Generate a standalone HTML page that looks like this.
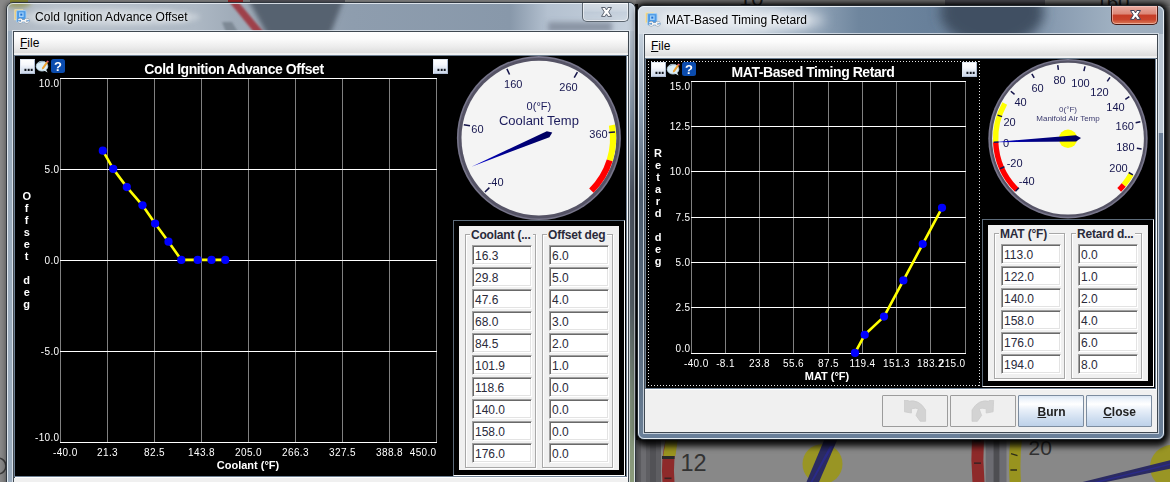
<!DOCTYPE html>
<html><head><meta charset="utf-8"><title>Ignition tables</title>
<style>
html,body{margin:0;padding:0}
body{width:1170px;height:482px;overflow:hidden;position:relative;background:#8a8a8a;font-family:"Liberation Sans", sans-serif;font-size:12px;color:#000}
div,span{box-sizing:border-box}
.abs{position:absolute}
.win{position:absolute;border-radius:7px 7px 7px 7px;}
.title{position:absolute;font-size:12px;color:#000;white-space:nowrap;text-shadow:0 0 5px rgba(255,255,255,.75),0 0 9px rgba(255,255,255,.55)}
.menu{position:absolute;background:linear-gradient(#ffffff 0%,#fbfbfb 30%,#ececec 65%,#dddddd 90%,#dddddd 91.3%,#eeeeee 91.4%,#f3f3f3 100%);}
.menu span{position:absolute;left:6px;top:4px;font-size:12px;line-height:14px}
.menu u{text-decoration:underline;text-underline-offset:1px}
.black{position:absolute;background:#000}
.tb{position:absolute;width:15px;height:15px;background:linear-gradient(#ffffff 0%,#f6f8fc 35%,#dde5f1 70%,#cdd8ea 100%);border:1px solid;border-color:#dfe6f0 #aebbd0 #aebbd0 #dfe6f0;font-size:11px;font-weight:bold;color:#223;line-height:12px;text-align:center}
.panel{position:absolute;background:#f0f0f0}
.grp{position:absolute;border:1px solid #d5d5d5;box-shadow:inset 1px 1px 0 #fff, 1px 1px 0 #fff;border-color:#a8a8a8}
.grp b{position:absolute;top:-7px;left:4px;background:#f0f0f0;padding:0 2px 0 1px;font-size:12px;line-height:14px;letter-spacing:-0.2px;color:#2a2a3a;white-space:nowrap}
.fld{position:absolute;height:20px;background:#fff;border:1px solid;border-color:#a0a0a0 #fff #fff #a0a0a0;box-shadow:inset 1px 1px 0 #696969,inset -1px -1px 0 #e3e3e3;font-size:12px;line-height:21px;padding-left:2px;color:#2a2a3a;white-space:nowrap;overflow:hidden}
.btn{position:absolute;height:32px;width:66px;border:1px solid #707070;border-radius:1px;font-size:12px;font-weight:bold;text-align:center;line-height:33px;color:#222;padding-left:1px}
.btn.on{background:linear-gradient(#dbe6f3 0%,#eef4fb 12%,#ffffff 27%,#e9f0f9 45%,#cfdef0 75%,#bdd1e9 100%);border-color:#7c8c9f}
.btn.off{background:#efefef;border-color:#9c9c9c}
svg text{font-family:"Liberation Sans", sans-serif}
</style></head><body>

<svg class="abs" style="left:0;top:0" width="1170" height="482" viewBox="0 0 1170 482">
<defs>
<filter id="bsh" x="-5%" y="-5%" width="110%" height="110%"><feGaussianBlur stdDeviation="3.2"/></filter>
<filter id="bsl" x="-5%" y="-5%" width="110%" height="110%"><feGaussianBlur stdDeviation="2"/></filter>
</defs>
<rect x="0" y="0" width="1170" height="482" fill="#888888"/>
<!-- things peeking above the windows -->
<rect x="228" y="0" width="15" height="3" fill="#a02828"/>
<rect x="250" y="0" width="95" height="3" fill="#56565c"/>
<rect x="10" y="0" width="18" height="3" fill="#8c8c34"/>
<rect x="636" y="0" width="534" height="6" fill="#7a7a7a"/>
<rect x="945" y="0" width="100" height="6" fill="#505058"/>
<text x="739" y="6" font-size="22" fill="#1c1c1c">10</text>
<text x="1096" y="9" font-size="20" fill="#1c1c1c">160</text>
<!-- lower strip objects -->
<rect x="636" y="436" width="25" height="46" fill="#5e5e62"/>
<rect x="641" y="436" width="5" height="46" fill="#6c6c70"/>
<rect x="650" y="436" width="6" height="46" fill="#525256"/>
<path d="M666,438 L678,438 Q672.5,460 674.5,482 L662.5,482 Q660.5,460 666,438Z" fill="#8e2a2a"/>
<path d="M666,438 L678,438 L675.4,456 L663.2,456Z" fill="#9a9420"/>
<rect x="662" y="456" width="12.5" height="3" fill="#2a2a2a"/>
<rect x="664.5" y="477.5" width="7" height="1.6" fill="#3a2222"/>
<text x="680.5" y="470.5" font-size="23.5" fill="#323232">12</text>
<circle cx="822.5" cy="464" r="20" fill="#999524"/>
<path d="M825,438 L838,438 L819,482 L806.5,482Z" fill="#2b2b62"/>
<path d="M830,446 L833,446 L812.5,482 L810.5,482Z" fill="#2a2a92" opacity=".8"/>
<path d="M972,438 L984,438 Q982.5,460 984.5,482 L972.5,482 Q970.5,460 972,438Z" fill="#8e2a2a"/>
<rect x="974" y="462.4" width="7" height="1.5" fill="#3a2222"/>
<rect x="974" y="440" width="7" height="1.5" fill="#3a2222"/>
<rect x="985.7" y="438" width="20.8" height="44" fill="#6c6c72"/>
<rect x="993.6" y="438" width="5.8" height="44" fill="#4e4e52"/>
<path d="M1010.5,438 L1022,438 Q1019.5,460 1021,482 L1009.6,482 Q1008,460 1010.5,438Z" fill="#98931f"/>
<path d="M1011,453.6 L1017.5,455.6 M1010.4,470 L1017,470" stroke="#2e2e1a" stroke-width="1.4"/>
<text x="1028.6" y="455" font-size="21" fill="#323232">20</text>
<circle cx="1172" cy="467" r="22" fill="#999524"/>
<path d="M1082.6,482 L1170,460.2 L1170,468.7 L1106,482Z" fill="#2b2b62"/>
<path d="M1094,482 L1170,463.5 L1170,465 L1100,482Z" fill="#2a2a92" opacity=".8"/>
<circle cx="-2" cy="466" r="8" fill="none" stroke="#3c3c3c" stroke-width="1.6"/>
<!-- window shadows -->
<rect x="4" y="1" width="634" height="490" rx="7" fill="#000" opacity=".12" filter="url(#bsl)"/>
<rect x="635" y="3" width="534" height="440" rx="8" fill="#000" opacity=".8" filter="url(#bsh)"/><rect x="638" y="20" width="528" height="427" rx="8" fill="#000" opacity=".55" filter="url(#bsh)"/>
<rect x="635" y="4" width="3" height="436" fill="#0c0c0c"/>
</svg>

<div class="win" style="left:6px;top:2px;width:630px;height:500px;border:1px solid #30373f;box-shadow:0 0 4px rgba(0,0,0,.32);overflow:hidden;background:#97a6b6">
<svg class="abs" style="left:-1px;top:-1px" width="630" height="482" viewBox="6 2 630 482">
<defs><filter id="bl1" x="-20%" y="-50%" width="140%" height="200%"><feGaussianBlur stdDeviation="2.6"/></filter>
<linearGradient id="lg1" x1="0" x2="1" y1="0" y2="0"><stop offset="0" stop-color="#aeb8c3"/><stop offset=".08" stop-color="#b8c1cb"/><stop offset=".3" stop-color="#adb8c4"/><stop offset=".36" stop-color="#a0acb9"/><stop offset=".55" stop-color="#8e9dae"/><stop offset=".8" stop-color="#8898aa"/><stop offset=".86" stop-color="#b4c1d0"/><stop offset="1" stop-color="#c6d1dd"/></linearGradient></defs>
<rect x="6" y="2" width="630" height="482" fill="url(#lg1)"/>
<g filter="url(#bl1)">
<path d="M246,-4 L345,-4 L328,40 L270,40Z" fill="#566270"/>

<ellipse cx="18" cy="2" rx="13" ry="6" fill="#8e8e3a" opacity=".7"/>
<rect x="548" y="22" width="64" height="10" fill="#7e8a98" opacity=".8"/>
<ellipse cx="110" cy="17" rx="90" ry="9" fill="#dfe5ea" opacity=".5"/>
</g>
<defs><filter id="bl1b" x="-20%" y="-20%" width="140%" height="140%"><feGaussianBlur stdDeviation="1.3"/></filter></defs>
<path d="M226,-2 L235,-2 L267,36 L257,36Z" fill="#9e3f48" filter="url(#bl1b)"/>
<path d="M222,22 L232,22 L238,32 L226,32Z" fill="#7d8894" filter="url(#bl1b)"/>
<rect x="7.5" y="31" width="6" height="455" fill="#9aabbc"/>
<defs><linearGradient id="lg4" x1="0" x2="0" y1="0" y2="1"><stop offset="0" stop-color="#bcc8d4"/><stop offset=".18" stop-color="#8595a7"/><stop offset=".36" stop-color="#4c5462"/><stop offset=".6" stop-color="#566068"/><stop offset=".8" stop-color="#7f8f7c"/><stop offset="1" stop-color="#8c9c7a"/></linearGradient></defs><rect x="629" y="31" width="6" height="455" fill="url(#lg4)"/>
<rect x="7.5" y="3.5" width="627" height="490" rx="5.5" fill="none" stroke="#e9eff5" stroke-opacity=".85" stroke-width="1"/>
<rect x="12.5" y="30.5" width="617" height="470" fill="none" stroke="#e6ecf2" stroke-opacity=".8"/>
</svg></div>
<svg class="abs" style="left:14px;top:9px" width="16" height="16" viewBox="0 0 16 16"><rect x="0.8" y="0.8" width="8" height="10" fill="#e8c878" stroke="#f4e4b0" stroke-width=".8"/><rect x="2.6" y="1.6" width="9.4" height="11.6" rx="1" fill="#4d9be6" stroke="#a8d0f4" stroke-width=".9"/><rect x="5" y="3.4" width="4.6" height="4.6" fill="#9fd0fa"/><rect x="6.3" y="4.6" width="2" height="2" fill="#1f6fd0"/><path d="M7.2,11.8 H11.8" stroke="#8e98a4" stroke-width="2.6"/><circle cx="6.2" cy="11.8" r="1.7" fill="none" stroke="#8e98a4" stroke-width="2"/><circle cx="12.8" cy="11.8" r="1.7" fill="none" stroke="#8e98a4" stroke-width="2"/><path d="M7.2,11.8 H11.8" stroke="#f4f6f8" stroke-width="1.7"/><circle cx="6.2" cy="11.8" r="1.7" fill="none" stroke="#f4f6f8" stroke-width="1.2"/><circle cx="12.8" cy="11.8" r="1.7" fill="none" stroke="#f4f6f8" stroke-width="1.2"/><path d="M3.6,11.8 h2 M13.4,11.8 h2" stroke="#4d9be6" stroke-width="1.1"/></svg>
<div class="title" style="left:35px;top:10px;line-height:14px;letter-spacing:.05px">Cold Ignition Advance Offset</div>
<div class="abs" style="left:582px;top:3px;width:47px;height:19px;border:1px solid #5c6670;border-top:none;border-radius:0 0 5px 5px;background:linear-gradient(rgba(255,255,255,.35),rgba(255,255,255,.16) 45%,rgba(220,228,238,.06) 50%,rgba(255,255,255,.2));box-shadow:inset 0 0 0 1px rgba(255,255,255,.55)"></div>
<svg class="abs" style="left:599px;top:6px" width="15" height="12" viewBox="0 0 15 12"><path d="M2.5,1.5 L6.2,1.5 L7.5,4 L8.8,1.5 L12.5,1.5 L9.7,5.95 L12.5,10.4 L8.8,10.4 L7.5,7.9 L6.2,10.4 L2.5,10.4 L5.3,5.95Z" fill="#fff" stroke="#5a6270" stroke-width="1" stroke-linejoin="round"/></svg>
<div class="abs" style="left:13px;top:31px;width:616px;height:460px;background:#3f4851"></div>
<div class="menu" style="left:14px;top:32px;width:614px;height:23px"><span><u>F</u>ile</span></div>
<div class="abs" style="left:14px;top:55px;width:613px;height:422px;background:#000;border:1px solid #6d7f92;box-shadow:1px 1px 0 #fff"></div>
<div class="abs" style="left:14px;top:478px;width:614px;height:4px;background:#f0f0f0"></div>

<div class="tb" style="left:20px;top:59px"></div><svg class="abs" style="left:20px;top:59px" width="15" height="15" viewBox="0 0 15 15"><text x="3.6" y="12" font-size="14" font-weight="bold" fill="#10141c" letter-spacing="-.8">...</text></svg><svg class="abs" style="left:35px;top:59px" width="16" height="16" viewBox="0 0 16 16"><ellipse cx="7" cy="7.2" rx="5.8" ry="4.9" fill="#dbeef8" stroke="#b9d3e2" stroke-width=".8"/><path d="M8.6,11.2 L12.6,13.6 L10.8,10Z" fill="#dbeef8"/><path d="M7.2,8.6 L11.4,2.6 L13,3.8 L8.8,9.8 L6.8,10.4Z" fill="#eda233"/><path d="M11.4,2.6 L12.2,1.4 L13.9,2.6 L13,3.8Z" fill="#e8607a"/><path d="M3.5,4 Q6,2.2 9.5,2.6" stroke="#8fa2ae" stroke-width=".9" fill="none"/></svg><div class="abs" style="left:51px;top:59px;width:14px;height:14px;background:#0b4cae;border-radius:2.5px;"></div><svg class="abs" style="left:51px;top:59px" width="14" height="14" viewBox="0 0 14 14"><text x="7" y="11.6" font-size="13" font-weight="bold" fill="#fff" text-anchor="middle">?</text></svg>
<div class="tb" style="left:433px;top:59px"></div><svg class="abs" style="left:433px;top:59px" width="15" height="15" viewBox="0 0 15 15"><text x="3.6" y="12" font-size="14" font-weight="bold" fill="#10141c" letter-spacing="-.8">...</text></svg>
<div class="abs" style="left:15px;top:60px;width:438px;height:18px;line-height:18px;text-align:center;color:#fff;font-size:14px;font-weight:bold;letter-spacing:-.44px;white-space:nowrap">Cold Ignition Advance Offset</div>
<svg class="abs" style="left:0;top:0" width="1170" height="482" viewBox="0 0 1170 482">
<rect x="60" y="78" width="1" height="365" fill="#808080"/>
<rect x="107" y="78" width="1" height="365" fill="#808080"/>
<rect x="154" y="78" width="1" height="365" fill="#808080"/>
<rect x="201" y="78" width="1" height="365" fill="#808080"/>
<rect x="248" y="78" width="1" height="365" fill="#808080"/>
<rect x="295" y="78" width="1" height="365" fill="#808080"/>
<rect x="342" y="78" width="1" height="365" fill="#808080"/>
<rect x="389" y="78" width="1" height="365" fill="#808080"/>
<rect x="436" y="78" width="1" height="365" fill="#808080"/>
<rect x="60" y="78" width="377" height="1" fill="#ffffff"/>
<rect x="60" y="169" width="377" height="1" fill="#ffffff"/>
<rect x="60" y="260" width="377" height="1" fill="#ffffff"/>
<rect x="60" y="351" width="377" height="1" fill="#ffffff"/>
<rect x="60" y="442" width="377" height="1" fill="#ffffff"/>
<text x="53" y="456.3" font-size="10" letter-spacing="0.35" fill="#fff" text-anchor="start">-40.0</text>
<text x="107.5" y="456.3" font-size="10" letter-spacing="0.35" fill="#fff" text-anchor="middle">21.3</text>
<text x="154.5" y="456.3" font-size="10" letter-spacing="0.35" fill="#fff" text-anchor="middle">82.5</text>
<text x="201.5" y="456.3" font-size="10" letter-spacing="0.35" fill="#fff" text-anchor="middle">143.8</text>
<text x="248.5" y="456.3" font-size="10" letter-spacing="0.35" fill="#fff" text-anchor="middle">205.0</text>
<text x="295.5" y="456.3" font-size="10" letter-spacing="0.35" fill="#fff" text-anchor="middle">266.3</text>
<text x="342.5" y="456.3" font-size="10" letter-spacing="0.35" fill="#fff" text-anchor="middle">327.5</text>
<text x="389.5" y="456.3" font-size="10" letter-spacing="0.35" fill="#fff" text-anchor="middle">388.8</text>
<text x="436.5" y="456.3" font-size="10" letter-spacing="0.35" fill="#fff" text-anchor="end">450.0</text>
<text x="59.5" y="87.3" font-size="10" letter-spacing="0.35" fill="#fff" text-anchor="end">10.0</text>
<text x="59.5" y="173.3" font-size="10" letter-spacing="0.35" fill="#fff" text-anchor="end">5.0</text>
<text x="59.5" y="264.3" font-size="10" letter-spacing="0.35" fill="#fff" text-anchor="end">0.0</text>
<text x="59.5" y="355.3" font-size="10" letter-spacing="0.35" fill="#fff" text-anchor="end">-5.0</text>
<text x="59.5" y="441.3" font-size="10" letter-spacing="0.35" fill="#fff" text-anchor="end">-10.0</text>
<text x="248" y="469" font-size="11" font-weight="bold" fill="#fff" text-anchor="middle">Coolant (°F)</text>
<text x="26.7" y="200" font-size="11" font-weight="bold" fill="#fff" text-anchor="middle">O</text>
<text x="26.7" y="212" font-size="11" font-weight="bold" fill="#fff" text-anchor="middle">f</text>
<text x="26.7" y="224" font-size="11" font-weight="bold" fill="#fff" text-anchor="middle">f</text>
<text x="26.7" y="236" font-size="11" font-weight="bold" fill="#fff" text-anchor="middle">s</text>
<text x="26.7" y="248" font-size="11" font-weight="bold" fill="#fff" text-anchor="middle">e</text>
<text x="26.7" y="260" font-size="11" font-weight="bold" fill="#fff" text-anchor="middle">t</text>
<text x="26.7" y="284" font-size="11" font-weight="bold" fill="#fff" text-anchor="middle">d</text>
<text x="26.7" y="296" font-size="11" font-weight="bold" fill="#fff" text-anchor="middle">e</text>
<text x="26.7" y="308" font-size="11" font-weight="bold" fill="#fff" text-anchor="middle">g</text>
<polyline points="102.8,150.7 113.2,168.9 126.8,187.1 142.5,205.3 155.1,223.5 168.5,241.7 181.3,259.9 197.7,259.9 211.5,259.9 225.3,259.9" fill="none" stroke="#ffff00" stroke-width="2.6" stroke-linejoin="round"/>
<circle cx="102.8" cy="150.7" r="4.1" fill="#0000ff"/>
<circle cx="113.2" cy="168.9" r="4.1" fill="#0000ff"/>
<circle cx="126.8" cy="187.1" r="4.1" fill="#0000ff"/>
<circle cx="142.5" cy="205.3" r="4.1" fill="#0000ff"/>
<circle cx="155.1" cy="223.5" r="4.1" fill="#0000ff"/>
<circle cx="168.5" cy="241.7" r="4.1" fill="#0000ff"/>
<circle cx="181.3" cy="259.9" r="4.1" fill="#0000ff"/>
<circle cx="197.7" cy="259.9" r="4.1" fill="#0000ff"/>
<circle cx="211.5" cy="259.9" r="4.1" fill="#0000ff"/>
<circle cx="225.3" cy="259.9" r="4.1" fill="#0000ff"/>
<circle cx="538.9" cy="138.1" r="82" fill="#77758a"/>
<circle cx="538.9" cy="138.1" r="80.4" fill="#555365"/>
<circle cx="538.9" cy="138.1" r="77.4" fill="#f4f4f4"/>
<path d="M611.95,125.09 A74.2,74.2 0 0 1 609.69,160.35" fill="none" stroke="#ffff00" stroke-width="6.2"/>
<path d="M609.69,160.35 A74.2,74.2 0 0 1 591.37,190.57" fill="none" stroke="#ff0000" stroke-width="6.2"/>
<line x1="484.95" y1="192.05" x2="489.40" y2="187.60" stroke="#14144a" stroke-width="1.5"/>
<text x="495.6" y="185.6" font-size="11" fill="#15154e" text-anchor="middle">-40</text>
<line x1="463.78" y1="124.72" x2="469.99" y2="125.82" stroke="#14144a" stroke-width="1.5"/>
<text x="477.4" y="132.6" font-size="11" fill="#15154e" text-anchor="middle">60</text>
<line x1="506.90" y1="68.83" x2="509.54" y2="74.55" stroke="#14144a" stroke-width="1.5"/>
<text x="513.3" y="88.0" font-size="11" fill="#15154e" text-anchor="middle">160</text>
<line x1="577.40" y1="72.23" x2="574.22" y2="77.67" stroke="#14144a" stroke-width="1.5"/>
<text x="568.5" y="90.9" font-size="11" fill="#15154e" text-anchor="middle">260</text>
<line x1="614.96" y1="131.99" x2="608.68" y2="132.50" stroke="#14144a" stroke-width="1.5"/>
<text x="598.5" y="138.0" font-size="11" fill="#15154e" text-anchor="middle">360</text>
<text x="538.9" y="109.69999999999999" font-size="11" fill="#1c1c5c" text-anchor="middle">0(°F)</text>
<text x="538.9" y="124.6" font-size="13" fill="#1c1c5c" text-anchor="middle">Coolant Temp</text>
<defs><linearGradient id="ng538" gradientUnits="userSpaceOnUse" x1="471.5" y1="166.7" x2="552.3" y2="132.4"><stop offset="0" stop-color="#0000d8"/><stop offset=".45" stop-color="#000088"/><stop offset="1" stop-color="#00005c"/></linearGradient></defs>
<polygon points="471.50,166.65 549.40,137.24 552.25,132.44 546.82,131.16" fill="url(#ng538)"/>
</svg>
<div class="abs" style="left:453px;top:220px;width:172px;height:256px;border:1px solid;border-color:#5d6b7a #fff #fff #5d6b7a;background:#000"></div>
<div class="panel" style="left:459px;top:226px;width:160px;height:244px"></div>
<div class="grp" style="left:465px;top:234px;width:71px;height:234px"><b>Coolant (...</b></div>
<div class="fld" style="left:472px;top:245px;width:60px">16.3</div>
<div class="fld" style="left:472px;top:267px;width:60px">29.8</div>
<div class="fld" style="left:472px;top:289px;width:60px">47.6</div>
<div class="fld" style="left:472px;top:311px;width:60px">68.0</div>
<div class="fld" style="left:472px;top:333px;width:60px">84.5</div>
<div class="fld" style="left:472px;top:355px;width:60px">101.9</div>
<div class="fld" style="left:472px;top:377px;width:60px">118.6</div>
<div class="fld" style="left:472px;top:399px;width:60px">140.0</div>
<div class="fld" style="left:472px;top:421px;width:60px">158.0</div>
<div class="fld" style="left:472px;top:443px;width:60px">176.0</div>
<div class="grp" style="left:542px;top:234px;width:71px;height:234px"><b>Offset deg</b></div>
<div class="fld" style="left:549px;top:245px;width:60px">6.0</div>
<div class="fld" style="left:549px;top:267px;width:60px">5.0</div>
<div class="fld" style="left:549px;top:289px;width:60px">4.0</div>
<div class="fld" style="left:549px;top:311px;width:60px">3.0</div>
<div class="fld" style="left:549px;top:333px;width:60px">2.0</div>
<div class="fld" style="left:549px;top:355px;width:60px">1.0</div>
<div class="fld" style="left:549px;top:377px;width:60px">0.0</div>
<div class="fld" style="left:549px;top:399px;width:60px">0.0</div>
<div class="fld" style="left:549px;top:421px;width:60px">0.0</div>
<div class="fld" style="left:549px;top:443px;width:60px">0.0</div>
<div class="win" style="left:637px;top:5px;width:528px;height:435px;border:1px solid #20262c;box-shadow:0 1px 9px rgba(0,0,0,.7),0 0 3px rgba(0,0,0,.6);overflow:hidden;background:#7c90a6">
<svg class="abs" style="left:-1px;top:-1px" width="528" height="435" viewBox="637 5 528 435">
<defs><filter id="bl2" x="-30%" y="-80%" width="160%" height="260%"><feGaussianBlur stdDeviation="6"/></filter>
<linearGradient id="lg2" x1="0" x2="1" y1="0" y2="0"><stop offset="0" stop-color="#d6dde4"/><stop offset=".2" stop-color="#c9d3dd"/><stop offset=".3" stop-color="#9fb0c2"/><stop offset=".42" stop-color="#6f869e"/><stop offset=".55" stop-color="#68809a"/><stop offset=".8" stop-color="#8a9db2"/><stop offset=".9" stop-color="#9fb0c1"/><stop offset="1" stop-color="#9dadbd"/></linearGradient></defs>
<rect x="637" y="5" width="528" height="435" fill="url(#lg2)"/>
<g filter="url(#bl2)">
<ellipse cx="992" cy="12" rx="52" ry="34" fill="#3f5062"/>
<ellipse cx="740" cy="20" rx="85" ry="11" fill="#e6ebf0" opacity=".8"/>
</g>
<defs><linearGradient id="lg3" x1="0" x2="0" y1="0" y2="1"><stop offset="0" stop-color="#c4d0dc"/><stop offset=".2" stop-color="#8a9cb0"/><stop offset=".4" stop-color="#4c5c6e"/><stop offset=".72" stop-color="#55677b"/><stop offset="1" stop-color="#6a7e94"/></linearGradient></defs><rect x="638.5" y="34" width="6" height="399" fill="url(#lg3)"/>
<rect x="1158" y="34" width="6" height="399" fill="#6a7e96"/>
<rect x="1158" y="34" width="6" height="99" fill="#bac6d2"/>
<rect x="638" y="433" width="527" height="7" fill="#6a809a"/>
<rect x="960" y="433" width="70" height="7" fill="#62707f" opacity=".6"/>
<rect x="638.5" y="6.5" width="525" height="432" rx="5.5" fill="none" stroke="#f0f5fa" stroke-opacity=".9" stroke-width="1"/>
<rect x="643.5" y="33.5" width="515" height="400" fill="none" stroke="#e4ebf2" stroke-opacity=".75"/>
</svg></div>
<svg class="abs" style="left:645px;top:12px" width="16" height="16" viewBox="0 0 16 16"><rect x="0.8" y="0.8" width="8" height="10" fill="#e8c878" stroke="#f4e4b0" stroke-width=".8"/><rect x="2.6" y="1.6" width="9.4" height="11.6" rx="1" fill="#4d9be6" stroke="#a8d0f4" stroke-width=".9"/><rect x="5" y="3.4" width="4.6" height="4.6" fill="#9fd0fa"/><rect x="6.3" y="4.6" width="2" height="2" fill="#1f6fd0"/><path d="M7.2,11.8 H11.8" stroke="#8e98a4" stroke-width="2.6"/><circle cx="6.2" cy="11.8" r="1.7" fill="none" stroke="#8e98a4" stroke-width="2"/><circle cx="12.8" cy="11.8" r="1.7" fill="none" stroke="#8e98a4" stroke-width="2"/><path d="M7.2,11.8 H11.8" stroke="#f4f6f8" stroke-width="1.7"/><circle cx="6.2" cy="11.8" r="1.7" fill="none" stroke="#f4f6f8" stroke-width="1.2"/><circle cx="12.8" cy="11.8" r="1.7" fill="none" stroke="#f4f6f8" stroke-width="1.2"/><path d="M3.6,11.8 h2 M13.4,11.8 h2" stroke="#4d9be6" stroke-width="1.1"/></svg>
<div class="title" style="left:666px;top:13px;line-height:14px;letter-spacing:.05px;text-shadow:0 0 6px #fff,0 0 10px rgba(255,255,255,.9),0 0 14px rgba(255,255,255,.7)">MAT-Based Timing Retard</div>
<div class="abs" style="left:1111px;top:6px;width:47px;height:19px;border:1px solid #4a1a14;border-top:none;border-radius:0 0 5px 5px;background:linear-gradient(#e9aca2 0%,#dc8676 45%,#c63c26 50%,#c9442c 75%,#d87a58 100%);box-shadow:inset 0 0 0 1px rgba(255,214,204,.55)"></div>
<svg class="abs" style="left:1128px;top:9px" width="15" height="12" viewBox="0 0 15 12"><path d="M2.5,1.5 L6.2,1.5 L7.5,4 L8.8,1.5 L12.5,1.5 L9.7,5.95 L12.5,10.4 L8.8,10.4 L7.5,7.9 L6.2,10.4 L2.5,10.4 L5.3,5.95Z" fill="#fff" stroke="#3e4058" stroke-width="1" stroke-linejoin="round"/></svg>
<div class="abs" style="left:644px;top:34px;width:514px;height:399px;background:#3f4851"></div>
<div class="menu" style="left:645px;top:35px;width:512px;height:23px"><span><u>F</u>ile</span></div>
<div class="abs" style="left:645px;top:58px;width:511px;height:331px;background:#000;border:1px solid #6d7f92;box-shadow:1px 1px 0 #fff"></div>
<div class="abs" style="left:645px;top:390px;width:512px;height:42px;background:#f0f0f0"></div><div class="abs" style="left:645px;top:389px;width:512px;height:1px;background:#fff"></div>
<div class="abs" style="left:648px;top:61px;width:332px;height:325px;background:repeating-linear-gradient(90deg,#e6e6e6 0 1px,transparent 1px 3px) 0 0/100% 1px no-repeat,repeating-linear-gradient(90deg,#e6e6e6 0 1px,transparent 1px 3px) 0 100%/100% 1px no-repeat,repeating-linear-gradient(180deg,#e6e6e6 0 1px,transparent 1px 3px) 0 0/1px 100% no-repeat,repeating-linear-gradient(180deg,#e6e6e6 0 1px,transparent 1px 3px) 100% 0/1px 100% no-repeat"></div>

<div class="tb" style="left:651px;top:62px"></div><svg class="abs" style="left:651px;top:62px" width="15" height="15" viewBox="0 0 15 15"><text x="3.6" y="12" font-size="14" font-weight="bold" fill="#10141c" letter-spacing="-.8">...</text></svg><svg class="abs" style="left:666px;top:62px" width="16" height="16" viewBox="0 0 16 16"><ellipse cx="7" cy="7.2" rx="5.8" ry="4.9" fill="#dbeef8" stroke="#b9d3e2" stroke-width=".8"/><path d="M8.6,11.2 L12.6,13.6 L10.8,10Z" fill="#dbeef8"/><path d="M7.2,8.6 L11.4,2.6 L13,3.8 L8.8,9.8 L6.8,10.4Z" fill="#eda233"/><path d="M11.4,2.6 L12.2,1.4 L13.9,2.6 L13,3.8Z" fill="#e8607a"/><path d="M3.5,4 Q6,2.2 9.5,2.6" stroke="#8fa2ae" stroke-width=".9" fill="none"/></svg><div class="abs" style="left:682px;top:62px;width:14px;height:14px;background:#0b4cae;border-radius:2.5px;"></div><svg class="abs" style="left:682px;top:62px" width="14" height="14" viewBox="0 0 14 14"><text x="7" y="11.6" font-size="13" font-weight="bold" fill="#fff" text-anchor="middle">?</text></svg>
<div class="tb" style="left:962px;top:62px"></div><svg class="abs" style="left:962px;top:62px" width="15" height="15" viewBox="0 0 15 15"><text x="3.6" y="12" font-size="14" font-weight="bold" fill="#10141c" letter-spacing="-.8">...</text></svg>
<div class="abs" style="left:645px;top:63px;width:336px;height:18px;line-height:18px;text-align:center;color:#fff;font-size:14px;font-weight:bold;letter-spacing:-.44px;white-space:nowrap">MAT-Based Timing Retard</div>
<svg class="abs" style="left:0;top:0" width="1170" height="482" viewBox="0 0 1170 482">
<rect x="691" y="81" width="1" height="273" fill="#808080"/>
<rect x="725" y="81" width="1" height="273" fill="#808080"/>
<rect x="759" y="81" width="1" height="273" fill="#808080"/>
<rect x="793" y="81" width="1" height="273" fill="#808080"/>
<rect x="828" y="81" width="1" height="273" fill="#808080"/>
<rect x="862" y="81" width="1" height="273" fill="#808080"/>
<rect x="896" y="81" width="1" height="273" fill="#808080"/>
<rect x="930" y="81" width="1" height="273" fill="#808080"/>
<rect x="965" y="81" width="1" height="273" fill="#808080"/>
<rect x="691" y="81" width="275" height="1" fill="#ffffff"/>
<rect x="691" y="126" width="275" height="1" fill="#ffffff"/>
<rect x="691" y="171" width="275" height="1" fill="#ffffff"/>
<rect x="691" y="217" width="275" height="1" fill="#ffffff"/>
<rect x="691" y="262" width="275" height="1" fill="#ffffff"/>
<rect x="691" y="307" width="275" height="1" fill="#ffffff"/>
<rect x="691" y="353" width="275" height="1" fill="#ffffff"/>
<text x="684" y="367.3" font-size="10" letter-spacing="0.35" fill="#fff" text-anchor="start">-40.0</text>
<text x="725.5" y="367.3" font-size="10" letter-spacing="0.35" fill="#fff" text-anchor="middle">-8.1</text>
<text x="759.5" y="367.3" font-size="10" letter-spacing="0.35" fill="#fff" text-anchor="middle">23.8</text>
<text x="793.5" y="367.3" font-size="10" letter-spacing="0.35" fill="#fff" text-anchor="middle">55.6</text>
<text x="828.5" y="367.3" font-size="10" letter-spacing="0.35" fill="#fff" text-anchor="middle">87.5</text>
<text x="862.5" y="367.3" font-size="10" letter-spacing="0.35" fill="#fff" text-anchor="middle">119.4</text>
<text x="896.5" y="367.3" font-size="10" letter-spacing="0.35" fill="#fff" text-anchor="middle">151.3</text>
<text x="930.5" y="367.3" font-size="10" letter-spacing="0.35" fill="#fff" text-anchor="middle">183.2</text>
<text x="965.5" y="367.3" font-size="10" letter-spacing="0.35" fill="#fff" text-anchor="end">215.0</text>
<text x="690.5" y="90.3" font-size="10" letter-spacing="0.35" fill="#fff" text-anchor="end">15.0</text>
<text x="690.5" y="130.3" font-size="10" letter-spacing="0.35" fill="#fff" text-anchor="end">12.5</text>
<text x="690.5" y="175.3" font-size="10" letter-spacing="0.35" fill="#fff" text-anchor="end">10.0</text>
<text x="690.5" y="221.3" font-size="10" letter-spacing="0.35" fill="#fff" text-anchor="end">7.5</text>
<text x="690.5" y="266.3" font-size="10" letter-spacing="0.35" fill="#fff" text-anchor="end">5.0</text>
<text x="690.5" y="311.3" font-size="10" letter-spacing="0.35" fill="#fff" text-anchor="end">2.5</text>
<text x="690.5" y="352.3" font-size="10" letter-spacing="0.35" fill="#fff" text-anchor="end">0.0</text>
<text x="827" y="380" font-size="11" font-weight="bold" fill="#fff" text-anchor="middle">MAT (°F)</text>
<text x="658" y="157" font-size="11" font-weight="bold" fill="#fff" text-anchor="middle">R</text>
<text x="658" y="169" font-size="11" font-weight="bold" fill="#fff" text-anchor="middle">e</text>
<text x="658" y="181" font-size="11" font-weight="bold" fill="#fff" text-anchor="middle">t</text>
<text x="658" y="193" font-size="11" font-weight="bold" fill="#fff" text-anchor="middle">a</text>
<text x="658" y="205" font-size="11" font-weight="bold" fill="#fff" text-anchor="middle">r</text>
<text x="658" y="217" font-size="11" font-weight="bold" fill="#fff" text-anchor="middle">d</text>
<text x="658" y="241" font-size="11" font-weight="bold" fill="#fff" text-anchor="middle">d</text>
<text x="658" y="253" font-size="11" font-weight="bold" fill="#fff" text-anchor="middle">e</text>
<text x="658" y="265" font-size="11" font-weight="bold" fill="#fff" text-anchor="middle">g</text>
<polyline points="855.0,352.9 864.7,334.8 884.0,316.6 903.4,280.4 922.7,244.1 942.0,207.8" fill="none" stroke="#ffff00" stroke-width="2.6" stroke-linejoin="round"/>
<circle cx="855.0" cy="352.9" r="4.1" fill="#0000ff"/>
<circle cx="864.7" cy="334.8" r="4.1" fill="#0000ff"/>
<circle cx="884.0" cy="316.6" r="4.1" fill="#0000ff"/>
<circle cx="903.4" cy="280.4" r="4.1" fill="#0000ff"/>
<circle cx="922.7" cy="244.1" r="4.1" fill="#0000ff"/>
<circle cx="942.0" cy="207.8" r="4.1" fill="#0000ff"/>
<circle cx="1068" cy="138.7" r="79.7" fill="#77758a"/>
<circle cx="1068" cy="138.7" r="78.10000000000001" fill="#555365"/>
<circle cx="1068" cy="138.7" r="75.9" fill="#f4f4f4"/>
<path d="M1016.81,189.89 A72.4,72.4 0 0 1 995.68,142.04" fill="none" stroke="#ff0000" stroke-width="5.4"/>
<path d="M995.68,142.04 A72.4,72.4 0 0 1 1004.75,103.47" fill="none" stroke="#ffff00" stroke-width="5.4"/>
<path d="M1131.25,173.93 A72.4,72.4 0 0 1 1123.70,184.95" fill="none" stroke="#ffff00" stroke-width="5.4"/>
<path d="M1123.70,184.95 A72.4,72.4 0 0 1 1119.19,189.89" fill="none" stroke="#ff0000" stroke-width="5.4"/>
<line x1="1015.46" y1="191.24" x2="1018.86" y2="187.84" stroke="#14144a" stroke-width="1.5"/>
<text x="1026.7" y="184.7" font-size="11" fill="#15154e" text-anchor="middle">-40</text>
<line x1="1000.03" y1="168.71" x2="1004.42" y2="166.77" stroke="#14144a" stroke-width="1.5"/>
<text x="1014.6" y="167.0" font-size="11" fill="#15154e" text-anchor="middle">-20</text>
<line x1="993.78" y1="142.13" x2="998.57" y2="141.91" stroke="#14144a" stroke-width="1.5"/>
<text x="1006.0" y="146.8" font-size="11" fill="#15154e" text-anchor="middle">0</text>
<line x1="997.55" y1="115.09" x2="1002.10" y2="116.61" stroke="#14144a" stroke-width="1.5"/>
<text x="1009.5" y="125.7" font-size="11" fill="#15154e" text-anchor="middle">20</text>
<line x1="1010.84" y1="91.23" x2="1014.53" y2="94.30" stroke="#14144a" stroke-width="1.5"/>
<text x="1020.5" y="105.8" font-size="11" fill="#15154e" text-anchor="middle">40</text>
<line x1="1031.85" y1="73.79" x2="1034.18" y2="77.98" stroke="#14144a" stroke-width="1.5"/>
<text x="1037.5" y="91.8" font-size="11" fill="#15154e" text-anchor="middle">60</text>
<line x1="1057.73" y1="65.11" x2="1058.40" y2="69.87" stroke="#14144a" stroke-width="1.5"/>
<text x="1059.5" y="83.9" font-size="11" fill="#15154e" text-anchor="middle">80</text>
<line x1="1085.01" y1="66.37" x2="1083.91" y2="71.05" stroke="#14144a" stroke-width="1.5"/>
<text x="1080.5" y="86.8" font-size="11" fill="#15154e" text-anchor="middle">100</text>
<line x1="1109.99" y1="77.40" x2="1107.28" y2="81.36" stroke="#14144a" stroke-width="1.5"/>
<text x="1099.5" y="96.0" font-size="11" fill="#15154e" text-anchor="middle">120</text>
<line x1="1129.30" y1="96.71" x2="1125.34" y2="99.42" stroke="#14144a" stroke-width="1.5"/>
<text x="1115.5" y="110.8" font-size="11" fill="#15154e" text-anchor="middle">140</text>
<line x1="1140.33" y1="121.69" x2="1135.65" y2="122.79" stroke="#14144a" stroke-width="1.5"/>
<text x="1124.8" y="129.7" font-size="11" fill="#15154e" text-anchor="middle">160</text>
<line x1="1141.59" y1="148.97" x2="1136.83" y2="148.30" stroke="#14144a" stroke-width="1.5"/>
<text x="1125.4" y="150.6" font-size="11" fill="#15154e" text-anchor="middle">180</text>
<line x1="1132.91" y1="174.85" x2="1128.72" y2="172.52" stroke="#14144a" stroke-width="1.5"/>
<text x="1118.5" y="171.5" font-size="11" fill="#15154e" text-anchor="middle">200</text>
<text x="1068" y="111.79999999999998" font-size="8" fill="#3a3a6e" text-anchor="middle">0(°F)</text>
<text x="1068" y="120.89999999999999" font-size="8" fill="#3a3a6e" text-anchor="middle">Manifold Air Temp</text>
<circle cx="1068" cy="138.7" r="9.2" fill="#ffff00"/>
<defs><linearGradient id="ng1068" gradientUnits="userSpaceOnUse" x1="993.5" y1="142.1" x2="1081.0" y2="138.1"><stop offset="0" stop-color="#0000d8"/><stop offset=".45" stop-color="#000088"/><stop offset="1" stop-color="#00005c"/></linearGradient></defs>
<polygon points="993.48,142.15 1076.13,141.43 1080.99,138.10 1075.85,135.23" fill="url(#ng1068)"/>
</svg>
<div class="abs" style="left:982px;top:219px;width:172px;height:168px;border:1px solid;border-color:#5d6b7a #fff #fff #5d6b7a;background:#000"></div>
<div class="panel" style="left:988px;top:225px;width:160px;height:156px"></div>
<div class="grp" style="left:994px;top:233px;width:71px;height:146px"><b>MAT (°F)</b></div>
<div class="fld" style="left:1001px;top:244px;width:60px">113.0</div>
<div class="fld" style="left:1001px;top:266px;width:60px">122.0</div>
<div class="fld" style="left:1001px;top:288px;width:60px">140.0</div>
<div class="fld" style="left:1001px;top:310px;width:60px">158.0</div>
<div class="fld" style="left:1001px;top:332px;width:60px">176.0</div>
<div class="fld" style="left:1001px;top:354px;width:60px">194.0</div>
<div class="grp" style="left:1071px;top:233px;width:71px;height:146px"><b>Retard d...</b></div>
<div class="fld" style="left:1078px;top:244px;width:60px">0.0</div>
<div class="fld" style="left:1078px;top:266px;width:60px">1.0</div>
<div class="fld" style="left:1078px;top:288px;width:60px">2.0</div>
<div class="fld" style="left:1078px;top:310px;width:60px">4.0</div>
<div class="fld" style="left:1078px;top:332px;width:60px">6.0</div>
<div class="fld" style="left:1078px;top:354px;width:60px">8.0</div>
<div class="btn off" style="left:882px;top:395px"></div>
<div class="btn off" style="left:950px;top:395px"></div>
<svg class="abs" style="left:904px;top:400px" width="24" height="24" viewBox="0 0 24 24"><path id="ur" d="M0,0.4 L4.3,0.4 L4.3,1.3 Q15,-1.2 21.6,10 L21.6,21.3 L16.2,21.3 L12,15.4 L14.4,8.8 Q12,7.6 7.4,8.8 L7.4,13 L0.5,11.8Z" fill="#d3d3d3" stroke="#cbcbcb" stroke-width=".8"/></svg>
<svg class="abs" style="left:971px;top:400px" width="24" height="24" viewBox="0 0 24 24"><path transform="translate(22.6,0) scale(-1,1)" d="M0,0.4 L4.3,0.4 L4.3,1.3 Q15,-1.2 21.6,10 L21.6,21.3 L16.2,21.3 L12,15.4 L14.4,8.8 Q12,7.6 7.4,8.8 L7.4,13 L0.5,11.8Z" fill="#d3d3d3" stroke="#cbcbcb" stroke-width=".8"/></svg>
<div class="btn on" style="left:1018px;top:395px"><u>B</u>urn</div>
<div class="btn on" style="left:1086px;top:395px"><u>C</u>lose</div>

</body></html>
